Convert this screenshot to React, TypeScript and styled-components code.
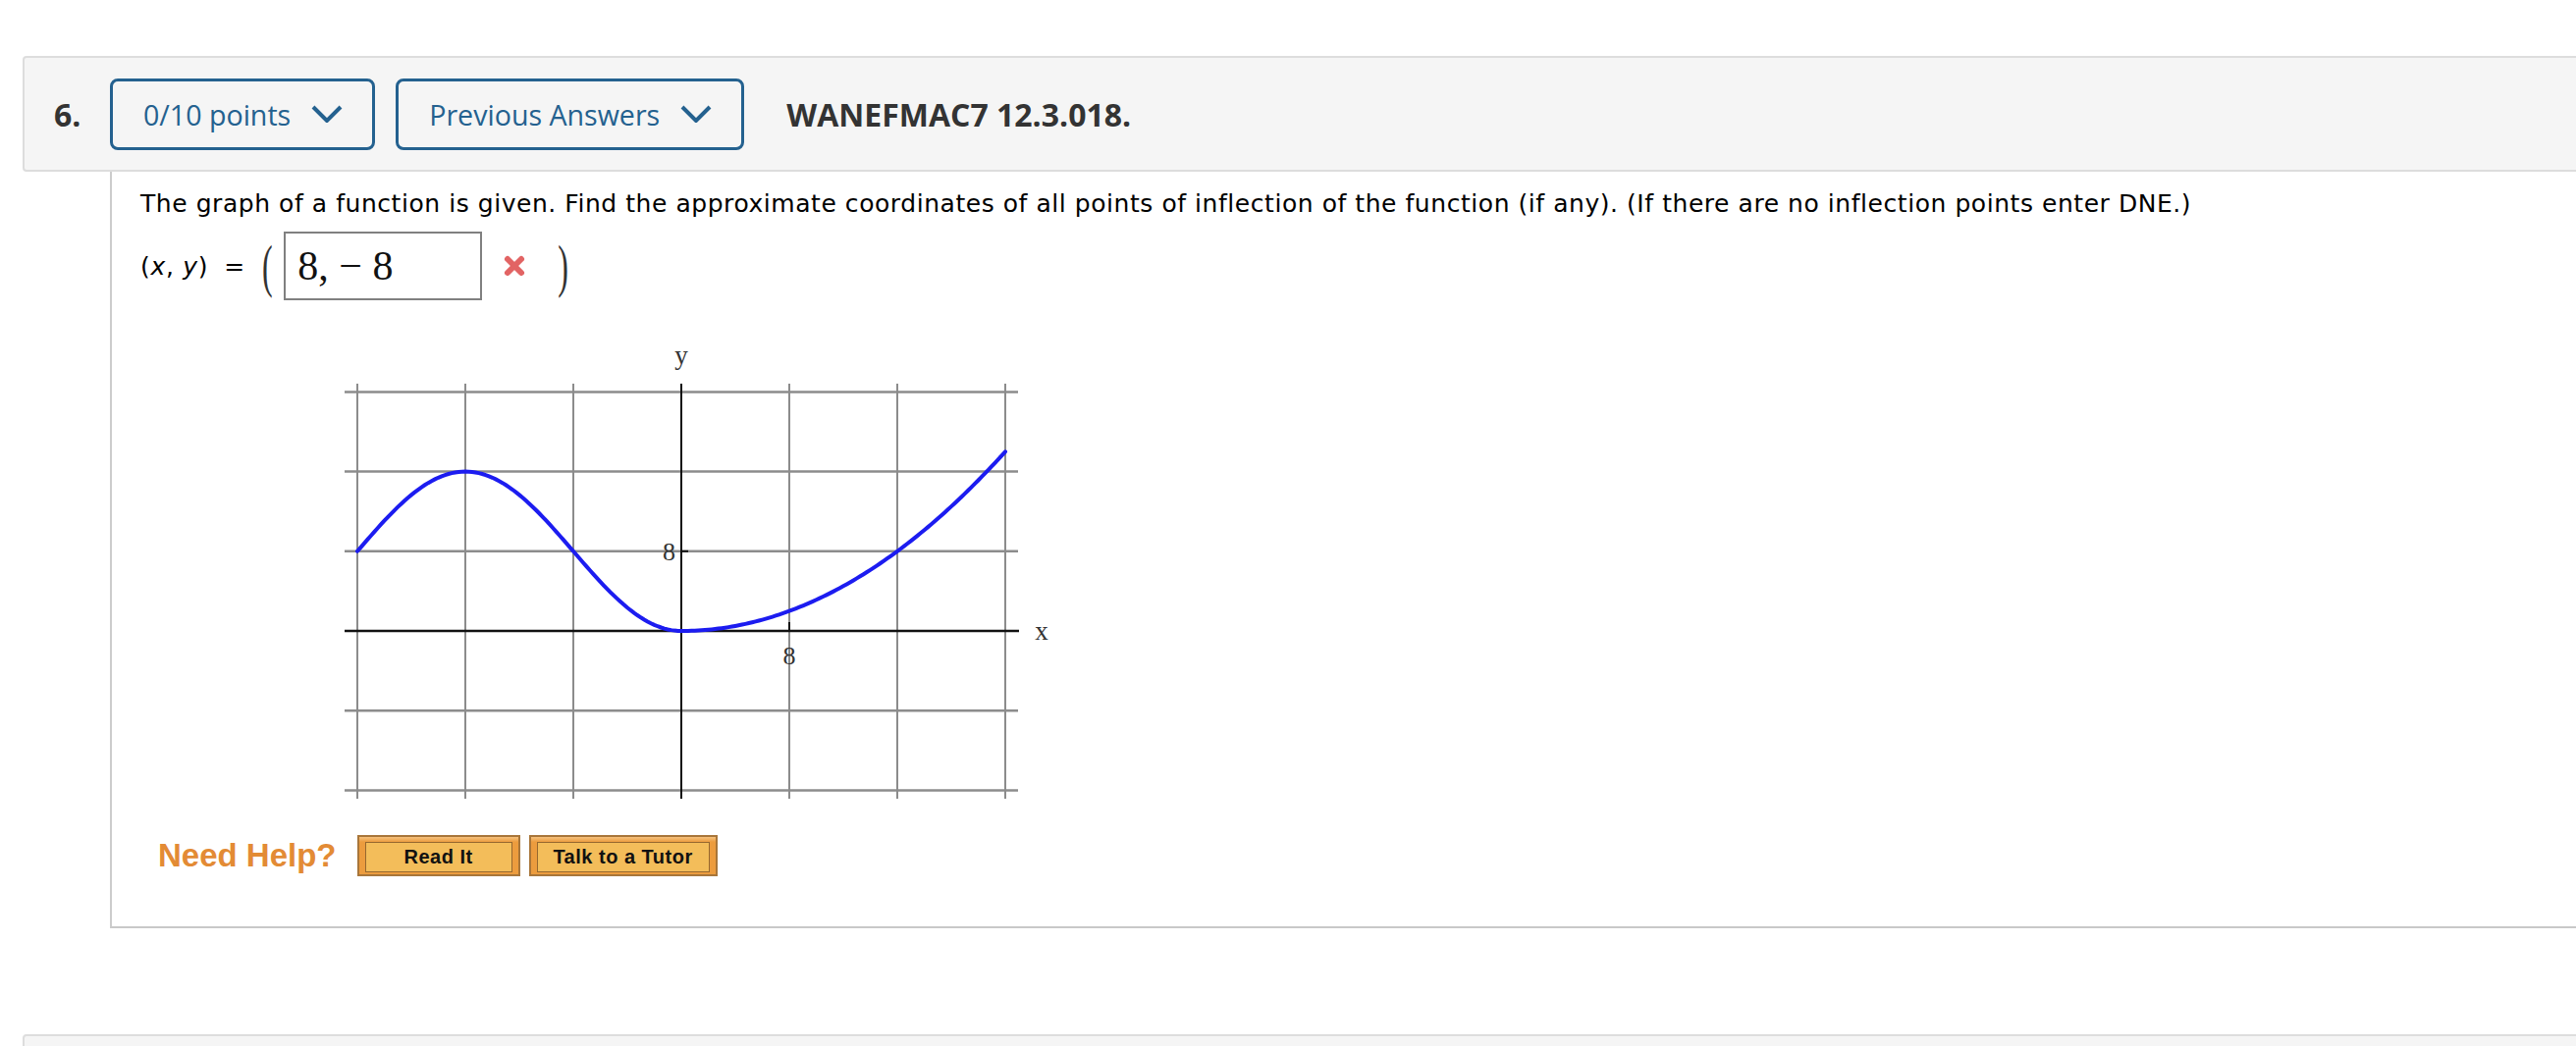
import React from "react";
import styled, { createGlobalStyle } from "styled-components";

const Global = createGlobalStyle`
  html, body { margin: 0; padding: 0; background: #ffffff; overflow: hidden; }
  body { font-family: "Open Sans", "DejaVu Sans", sans-serif; }
`;

const Page = styled.div`
  padding: 57px 0 0 23px;
  width: 2700px;
`;

const Header = styled.div`
  display: flex;
  align-items: center;
  box-sizing: content-box;
  height: 114px;
  padding-left: 30px;
  background: #f5f5f5;
  border: 2px solid #dddddd;
  border-radius: 4px;
`;

const Number = styled.span`
  min-width: 57px;
  font-size: 32px;
  font-weight: 700;
  color: #333333;
`;

const DropButton = styled.button<{ $ml?: number }>`
  display: flex;
  align-items: center;
  gap: 21px;
  height: 73px;
  margin-left: ${(p) => p.$ml ?? 0}px;
  padding: 0 30px 0 31px;
  border: 3px solid #24618f;
  border-radius: 8px;
  background: transparent;
  font-family: "Open Sans", sans-serif;
  font-size: 28.6px;
  color: #24618f;
  cursor: pointer;
`;

const Title = styled.span`
  margin-left: 43px;
  font-size: 32px;
  font-weight: 700;
  color: #333333;
`;

const Panel = styled.div`
  margin-left: 89px;
  border-left: 2px solid #cccccc;
  border-bottom: 2px solid #c8c8c8;
  padding: 18px 0 51px 29px;
  font-family: "DejaVu Sans", Verdana, sans-serif;
  color: #000000;
`;

const Question = styled.p`
  margin: 0;
  font-size: 25px;
  letter-spacing: 0.55px;
  line-height: 30px;
`;

const AnswerRow = styled.div`
  display: flex;
  align-items: center;
  height: 70px;
  margin-top: 13px;
  font-size: 25px;
  letter-spacing: 0.7px;
`;

const Eq = styled.span`
  margin-left: 16px;
`;

const Paren = styled.span<{ $ml: number }>`
  display: inline-block;
  margin-left: ${(p) => p.$ml}px;
  font-family: "Liberation Serif", serif;
  font-size: 32px;
  line-height: 1;
  color: #333333;
  transform: scaleY(1.85);
`;

const AnswerBox = styled.div`
  display: flex;
  align-items: center;
  box-sizing: border-box;
  width: 202px;
  height: 70px;
  margin-left: 11px;
  padding-left: 12px;
  border: 2px solid #808080;
  font-family: "Liberation Serif", serif;
  font-size: 42px;
  letter-spacing: 0;
  color: #111111;
`;

const Mark = styled.svg`
  margin-left: 21px;
  width: 24px;
  height: 24px;
`;

const Graph = styled.svg`
  display: block;
  margin: 35px 0 0 197px;
`;

const HelpRow = styled.div`
  display: flex;
  align-items: center;
  height: 42px;
  margin: 20px 0 0 18px;
`;

const NeedHelp = styled.span`
  margin-right: 21px;
  font-family: "Liberation Sans", Arial, sans-serif;
  font-size: 33px;
  font-weight: 700;
  color: #e38b35;
`;

const HelpButton = styled.button<{ $w: number; $ml?: number }>`
  box-sizing: border-box;
  width: ${(p) => p.$w}px;
  height: 42px;
  margin-left: ${(p) => p.$ml ?? 0}px;
  padding: 5px 6px 4px;
  border: 2px solid #a8763a;
  background: linear-gradient(#f6c27e 0, #ec9c3e 5px, #ec9c3e 100%);
  cursor: pointer;
`;

const HelpInner = styled.span`
  display: flex;
  align-items: center;
  justify-content: center;
  height: 100%;
  border: 1px solid #96682f;
  background: #f3bd5a;
  font-family: "Liberation Sans", Arial, sans-serif;
  font-size: 20px;
  font-weight: 700;
  letter-spacing: 0.5px;
  color: #111111;
`;

const NextHeader = styled(Header)`
  margin-top: 108px;
`;

const Chevron = () => (
  <svg width="32" height="18" viewBox="0 0 32 18">
    <polyline points="2,2 16,16 30,2" fill="none" stroke="#24618f" strokeWidth="4" />
  </svg>
);

const OX = 354;
const OY = 302;
const SX = 110 / 8;
const SY = 81.2 / 8;

function curvePath(): string {
  const pts: string[] = [];
  for (let x = -24; x <= 24.001; x += 0.25) {
    const f = x <= 0 ? 8 + 8 * Math.sin((Math.PI * (x + 24)) / 16) : (x * x) / 32;
    const X = OX + x * SX;
    const Y = OY - f * SY;
    pts.push(`${pts.length ? "L" : "M"}${X.toFixed(2)},${Y.toFixed(2)}`);
  }
  return pts.join(" ");
}

const vx = [-3, -2, -1, 1, 2, 3].map((k) => OX + k * 110);
const hy = [-3, -2, -1, 1, 2].map((k) => OY + k * 81.2);

export default function App() {
  return (
    <>
      <Global />
      <Page>
        <Header>
          <Number>6.</Number>
          <DropButton>
            0/10 points
            <Chevron />
          </DropButton>
          <DropButton $ml={21}>
            Previous Answers
            <Chevron />
          </DropButton>
          <Title>WANEFMAC7 12.3.018.</Title>
        </Header>
        <Panel>
          <Question>
            The graph of a function is given. Find the approximate coordinates of all points of
            inflection of the function (if any). (If there are no inflection points enter DNE.)
          </Question>
          <AnswerRow>
            <span>
              (<i>x</i>, <i>y</i>)
            </span>
            <Eq>=</Eq>
            <Paren $ml={17}>(</Paren>
            <AnswerBox>8, − 8</AnswerBox>
            <Mark viewBox="0 0 24 24">
              <line x1="5" y1="5" x2="19" y2="19" stroke="#e26464" strokeWidth="6" strokeLinecap="round" />
              <line x1="19" y1="5" x2="5" y2="19" stroke="#e26464" strokeWidth="6" strokeLinecap="round" />
            </Mark>
            <Paren $ml={32}>)</Paren>
          </AnswerRow>
          <Graph width="740" height="490" viewBox="0 0 740 490">
            {hy.map((y) => (
              <line key={"h" + y} x1="11" y1={y} x2="697" y2={y} stroke="#8c8c8c" strokeWidth="2.5" />
            ))}
            {vx.map((x) => (
              <line key={"v" + x} x1={x} y1="50" x2={x} y2="473" stroke="#8c8c8c" strokeWidth="2" />
            ))}
            <line x1="11" y1={OY} x2="698" y2={OY} stroke="#111" strokeWidth="2.5" />
            <line x1={OX} y1="50" x2={OX} y2="473" stroke="#111" strokeWidth="2" />
            <line x1={OX} y1={OY - 81.2} x2={OX + 7} y2={OY - 81.2} stroke="#111" strokeWidth="2" />
            <line x1={OX + 110} y1={OY - 9} x2={OX + 110} y2={OY} stroke="#111" strokeWidth="2" />
            <path d={curvePath()} fill="none" stroke="#1c1cf0" strokeWidth="4" strokeLinecap="round" />
            <text x={OX} y="30" textAnchor="middle" fontFamily="Liberation Serif, serif" fontSize="27" fill="#333">
              y
            </text>
            <text x="721" y={OY + 9} textAnchor="middle" fontFamily="Liberation Serif, serif" fontSize="27" fill="#333">
              x
            </text>
            <text x={OX - 6} y={OY - 81.2 + 9} textAnchor="end" fontFamily="Liberation Serif, serif" fontSize="26" fill="#333">
              8
            </text>
            <text x={OX + 110} y={OY + 34} textAnchor="middle" fontFamily="Liberation Serif, serif" fontSize="26" fill="#333">
              8
            </text>
          </Graph>
          <HelpRow>
            <NeedHelp>Need Help?</NeedHelp>
            <HelpButton $w={166}>
              <HelpInner>Read It</HelpInner>
            </HelpButton>
            <HelpButton $w={192} $ml={9}>
              <HelpInner>Talk to a Tutor</HelpInner>
            </HelpButton>
          </HelpRow>
        </Panel>
        <NextHeader />
      </Page>
    </>
  );
}
